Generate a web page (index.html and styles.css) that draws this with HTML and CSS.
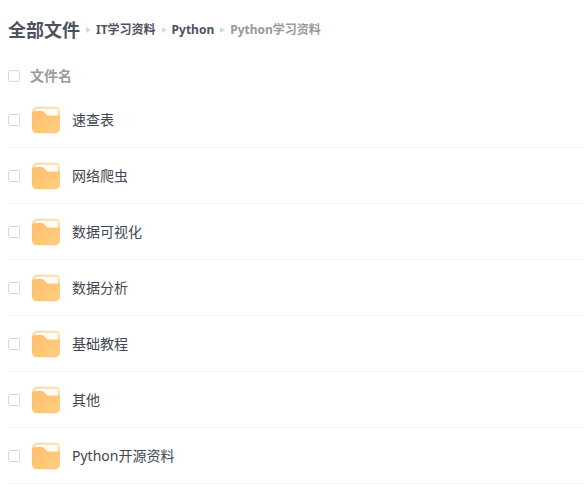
FILE: index.html
```html
<!DOCTYPE html>
<html lang="zh-CN">
<head>
    <meta charset="UTF-8">
    <meta name="viewport" content="width=device-width, initial-scale=1.0">
    <title>全部文件</title>
    <link rel="stylesheet" href="styles.css">
</head>
<body>
    <!-- shared folder icon -->
    <svg class="defs" width="0" height="0" aria-hidden="true">
        <defs>
            <linearGradient id="folderFront" x1="0" y1="0" x2="1" y2="1">
                <stop offset="0" stop-color="#ffbd6b"/>
                <stop offset="1" stop-color="#ffd083"/>
            </linearGradient>
            <symbol id="folder" viewBox="0 0 28 28">
                <rect x="0" y="0.700" width="28" height="22" rx="5" fill="#ffdcae"/>
                <rect x="2.500" y="2.800" width="23.500" height="12" rx="2.500" fill="#fffaf2"/>
                <path d="M0 8C0 6 1.500 5 3.500 5H8.500c2 0 3 .4 4.200 1.800l1 1.100C14.700 9.100 15.800 9.500 17.500 9.500H28v13a4.800 4.800 0 0 1-4.800 4.800H4.800A4.800 4.800 0 0 1 0 22.500z" fill="url(#folderFront)"/>
            </symbol>
        </defs>
    </svg>

    <nav class="path">
        <a class="root" href="#">全部文件</a>
        <span class="arrow"></span>
        <a href="#">IT学习资料</a>
        <span class="arrow"></span>
        <a href="#">Python</a>
        <span class="arrow"></span>
        <span class="current">Python学习资料</span>
    </nav>

    <table class="files">
        <thead>
            <tr>
                <th class="check"><input type="checkbox" id="all" aria-label="全选"></th>
                <th class="title"><label for="all">文件名</label></th>
            </tr>
        </thead>
        <tbody>
            <tr>
                <td class="check"><input type="checkbox" id="f1"></td>
                <td><label class="name" for="f1"><svg class="icon"><use href="#folder"/></svg>速查表</label></td>
            </tr>
            <tr>
                <td class="check"><input type="checkbox" id="f2"></td>
                <td><label class="name" for="f2"><svg class="icon"><use href="#folder"/></svg>网络爬虫</label></td>
            </tr>
            <tr>
                <td class="check"><input type="checkbox" id="f3"></td>
                <td><label class="name" for="f3"><svg class="icon"><use href="#folder"/></svg>数据可视化</label></td>
            </tr>
            <tr>
                <td class="check"><input type="checkbox" id="f4"></td>
                <td><label class="name" for="f4"><svg class="icon"><use href="#folder"/></svg>数据分析</label></td>
            </tr>
            <tr>
                <td class="check"><input type="checkbox" id="f5"></td>
                <td><label class="name" for="f5"><svg class="icon"><use href="#folder"/></svg>基础教程</label></td>
            </tr>
            <tr>
                <td class="check"><input type="checkbox" id="f6"></td>
                <td><label class="name" for="f6"><svg class="icon"><use href="#folder"/></svg>其他</label></td>
            </tr>
            <tr>
                <td class="check"><input type="checkbox" id="f7"></td>
                <td><label class="name" for="f7"><svg class="icon"><use href="#folder"/></svg>Python开源资料</label></td>
            </tr>
        </tbody>
    </table>
</body>
</html>
```

FILE: styles.css
```css
* { box-sizing: border-box; }
body { margin: 0; padding: 0 1px 0 8px; background-color: #fff; color: #424650; font-family: "Noto Sans", "Noto Sans CJK SC", sans-serif; font-size: 14px; line-height: 20px; }
.defs { position: absolute; }

.path { display: flex; align-items: center; height: 60px; font-size: 12px; font-weight: bold; }
.path a { color: #4e525c; text-decoration: none; }
.path .root { font-size: 18px; }
.path .current { color: #999; }
.arrow { margin: 0 5px 0 6px; border: 3px solid transparent; border-left: 5px solid #d9d9d9; border-right: 0; }

.files { width: 100%; border-collapse: separate; border-spacing: 0; table-layout: fixed; }
.files th, .files td { padding: 0; text-align: left; vertical-align: middle; }
.files th { height: 32px; }
.files td { height: 56px; border-bottom: 1px solid #f5f5f6; }
.files .check { width: 22px; }
.title { color: #999ba1; font-weight: bold; }
.name { display: flex; align-items: center; gap: 12px; padding-left: 2px; }
.icon { width: 28px; height: 28px; }

input[type="checkbox"] { appearance: none; display: block; width: 12px; height: 12px; margin: 0; border: 1px solid #d9dadc; border-radius: 2px; background-color: #fff; }
input[type="checkbox"]:checked { background-color: #ffbd6b; }
```
